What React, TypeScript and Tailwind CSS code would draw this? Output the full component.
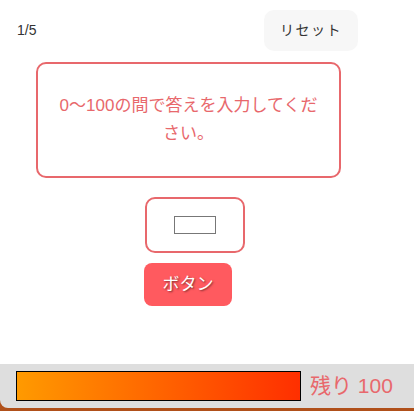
export default function App() {
  return (
    <div className="relative w-[414px] h-[411px] bg-white overflow-hidden" style={{ fontFamily: '"Liberation Sans", "Noto Sans CJK JP", sans-serif' }}>
      <div className="flex items-center justify-between pl-[17px] pr-[56px] pt-[10px]">
        <span className="text-[14px] text-[#333]">1/5</span>
        <button className="w-[94px] h-[41px] rounded-[10px] bg-[#f7f7f7] text-[14px] text-[#333] tracking-[1.5px]">リセット</button>
      </div>
      <div className="ml-[36px] mt-[11px] w-[305px] h-[116px] border-2 border-[#e8686c] rounded-[10px] flex items-center justify-center">
        <p className="w-[262px] text-[17px] leading-[28px] text-[#e8686c] text-center">0〜100の間で答えを入力してください。</p>
      </div>
      <div className="flex flex-col items-start pl-[145px] mt-[19px]">
        <div className="w-[100px] h-[56px] border-2 border-[#e8686c] rounded-[10px] flex items-center justify-center">
          <div className="w-[42px] h-[18px] border border-[#777] bg-white"></div>
        </div>
        <button className="mt-[10px] ml-[-1px] w-[88px] h-[43px] rounded-[8px] bg-[#ff5a5f] text-white text-[17px]" style={{ textShadow: '1px 1px 2px rgba(0,0,0,0.5)' }}>ボタン</button>
      </div>
      <div className="absolute left-0 right-0 bottom-0 h-[47px] bg-[#b0501a]">
        <div className="h-[44px] bg-[#dedede] rounded-bl-[8px] flex items-center pl-[16px]">
          <div className="w-[285px] h-[30px] border border-black" style={{ background: 'linear-gradient(to right, #ff9a00, #ff2f00)' }}></div>
          <span className="ml-[9px] text-[21px] text-[#e8686c]">残り 100</span>
        </div>
      </div>
    </div>
  );
}
